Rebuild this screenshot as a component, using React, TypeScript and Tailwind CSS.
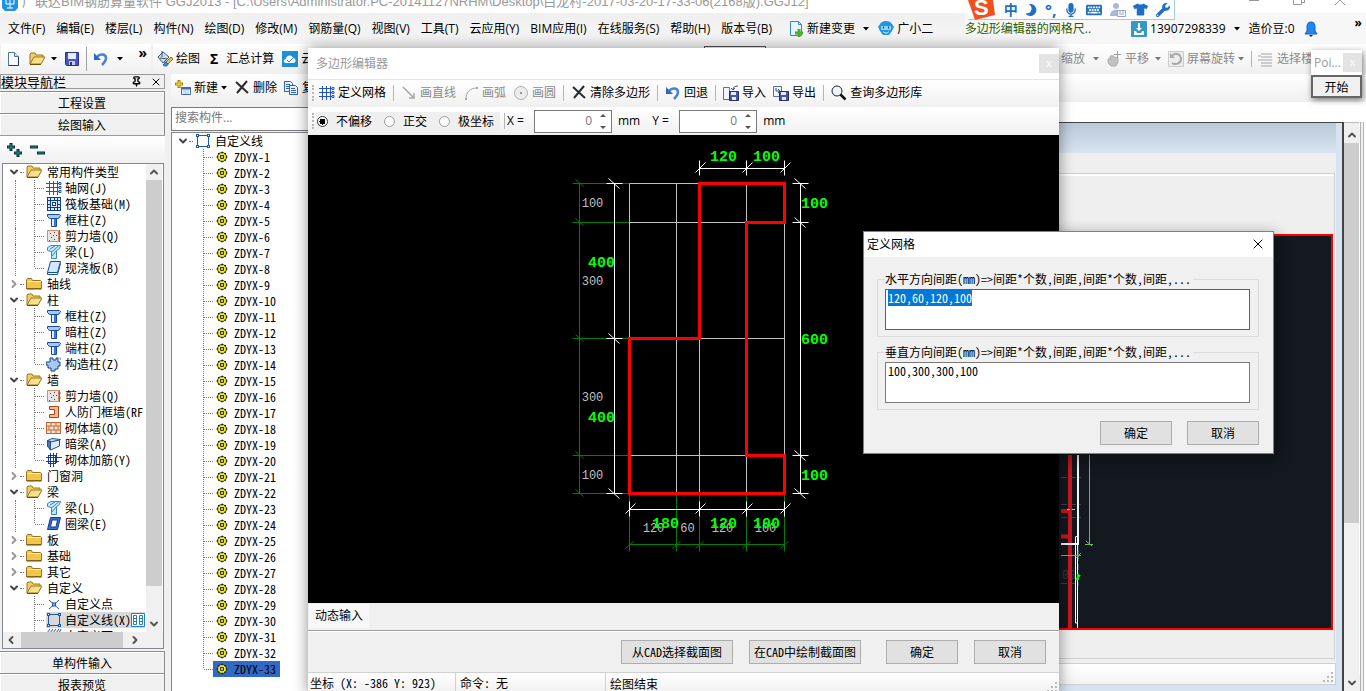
import { useEffect, useRef } from 'react'
import type { ReactNode } from 'react'
import { ChevronDown, ChevronLeft, ChevronRight, ChevronUp, Pin, X } from 'lucide-react'
import { FaKeyboard, FaMicrophone, FaMoon, FaTshirt, FaWrench } from 'react-icons/fa'

const ui = "font-['Open_Sans','Noto_Sans_CJK_SC',sans-serif]"
// half-width latin, the way the old bitmap font sets it
const song = "font-['Noto_Sans_CJK_SC',sans-serif] [font-feature-settings:'hwid']"

type IconName =
  | 'open' | 'closed' | 'grid' | 'raft' | 'column' | 'wall' | 'beam' | 'slab' | 'tie' | 'door'
  | 'brick' | 'hidden' | 'rebar' | 'ring' | 'point' | 'line' | 'face2' | 'gear' | 'file' | 'save' | 'undo'
  | 'paint' | 'cloud' | 'new' | 'delete' | 'copy' | 'straight' | 'arc' | 'circle' | 'import'
  | 'export' | 'search' | 'change' | 'robot' | 'download' | 'bell' | 'hand' | 'rotate' | 'layers' | 'face'

const shapes: Record<IconName, ReactNode> = {
  open: (
    <>
      <path d="M1 13V3l1-1h4l1 2h7v3" fill="#f3cf63" stroke="#9a7420" />
      <path d="M1 13 5 6h11l-4 7z" fill="#fbe08a" stroke="#9a7420" />
      <path d="M1 13.500h11" stroke="#6b4e12" />
    </>
  ),
  closed: (
    <>
      <path d="M.5 12.500V3.500l1-1h4l1 2h8l1 1v7z" fill="#f2c64d" stroke="#9a7420" />
      <path d="M1.500 5.500h13" stroke="#fdeeb5" />
      <path d="M.5 13h15" stroke="#6b4e12" />
    </>
  ),
  grid: (
    <>
      <path d="M3.500 1v14M7.500 1v14M11.500 1v14M0 3.500h13M0 7.500h13M0 11.500h13" stroke="#2356b8" fill="none" />
      <path d="M13 2.500h2v2h-2zM13 6.500h2v2h-2zM13 10.500h2v2h-2z" stroke="#2356b8" />
    </>
  ),
  raft: (
    <>
      <rect x="1.500" y="1.500" width="13" height="13" fill="#dbe9fb" stroke="#0d3f86" />
      <path d="M4.500 2v12M11.500 2v12M2 4.500h12M2 11.500h12M2 8.500h3M11 8.500h3M8.500 2v3M8.500 11v3" stroke="#0d3f86" />
      <rect x="6.500" y="6.500" width="3" height="3" fill="#fff" stroke="#0d3f86" />
    </>
  ),
  column: (
    <>
      <path d="M1.500 2.500h12l1 1-2 3h-9l-2-2z" fill="#a9c8f3" stroke="#164c9f" />
      <path d="M5.500 6.500h5v8h-5z" fill="#e2eefc" stroke="#164c9f" />
      <path d="M9 7v7" stroke="#3d7bd0" strokeWidth="2" />
    </>
  ),
  wall: (
    <>
      <path d="M1.500 2.500h11v11h-11z" fill="#e6e6e6" stroke="#d58a61" />
      <path d="M4 5.500h1M8 4.500h1M10 7.500h1M5 9.500h1M8 11.500h1M3 12.500h1M7 7.500h1" stroke="#444" />
      <path d="M13.500 2v12M12 5h3M12 10h3" stroke="#b5562b" />
    </>
  ),
  beam: (
    <>
      <path d="M1.500 3.500 5 1.500h9.500l-1 3-3 2v8h-5v-7l-4-1z" fill="#cbe6fa" stroke="#2b8bd0" />
      <path d="m4 5 5-3M5.500 8l7-6M6 12l4-5" stroke="#2b8bd0" />
    </>
  ),
  slab: (
    <>
      <path d="M4.500 1.500h10l-3 11h-10z" fill="#d3e6fb" stroke="#174c9f" />
      <path d="M1.500 12.500v2h10l3-11" stroke="#174c9f" fill="none" />
    </>
  ),
  tie: (
    <>
      <path d="M4 2h3v2h3V2h2v4h2v4h-2v3H9v2H5v-3H2V9H0V6h4z" fill="#a7c9f2" stroke="#153f86" />
      <path d="M12.500 2h2v2" stroke="#7aa5dd" />
    </>
  ),
  door: <path d="M3.500 2.500h9v11h-9v-3h5v-5h-5z" fill="#f7b68d" stroke="#a14a1a" />,
  brick: (
    <>
      <rect x=".5" y="2.500" width="14" height="11" fill="#fbe4d4" stroke="#c8632f" />
      <path d="M1 6h13M1 10h13M5 3v3M10 3v3M3 6v4M8 6v4M12 6v4M5 10v3M10 10v3" stroke="#c8632f" />
    </>
  ),
  hidden: (
    <>
      <path d="M1.500 4.500 6 2.500l8.500 1-8 2.500z" fill="#c6dcf4" stroke="#26508c" />
      <path d="M1.500 4.500v6l3 3.500V6z" fill="#4876b8" stroke="#26508c" />
      <path d="m4.500 6 9-2v6l-9 4z" fill="#dce9f8" stroke="#26508c" />
    </>
  ),
  rebar: (
    <>
      <path d="M4.500 1v14M7.500 1v14M0 5.500h16M0 9.500h13M10.500 1v10" stroke="#133c9a" fill="none" />
      <rect x="2.500" y="3.500" width="7" height="8" fill="none" stroke="#133c9a" />
    </>
  ),
  ring: (
    <>
      <path d="M4.500 1.500h10l-3 12h-10z" fill="#3a6fd0" stroke="#123d96" />
      <path d="M6 4h5.500l-1.500 7H4.500z" fill="#fff" stroke="#123d96" />
    </>
  ),
  point: (
    <>
      <path d="m3 4 10 9M13 4 3 13" stroke="#1c55b0" />
      <rect x="6.500" y="7" width="3" height="3" fill="#7fb4f0" stroke="#1c55b0" />
    </>
  ),
  line: (
    <>
      <path d="M2.500 2.500h11v11h-11z" fill="none" stroke="#1d56b5" />
      <path d="M1 1h3v3H1zM12 1h3v3h-3zM1 12h3v3H1zM12 12h3v3h-3z" fill="#1d56b5" />
      <path d="M2 2h1v1H2zM13 2h1v1h-1zM2 13h1v1H2zM13 13h1v1h-1z" fill="#fff" />
    </>
  ),
  face2: <path d="m1 5 3-4M4 5l3-4M7 5l3-4M10 5l3-4M13 5l2-4M1 12V6h13v6" stroke="#1d56b5" />,
  gear: (
    <>
      <circle cx="8" cy="8" r="4.500" fill="#ff0" stroke="#222" strokeWidth="1" />
      <path d="M8 2.500v11M2.500 8h11M4 4l8 8M12 4l-8 8" stroke="#222" strokeDasharray="2 1" />
      <circle cx="8" cy="8" r="3" stroke="#ff0" />
      <circle cx="8" cy="8" r="1.500" fill="#fff" stroke="#222" />
    </>
  ),
  file: (
    <>
      <path d="M3.500 1.500h6l4 4v9h-10z" fill="#f8fbff" stroke="#54749c" />
      <path d="M9.500 1.500v4h4" fill="#c9dcf2" stroke="#54749c" />
      <path d="M13.500 6v8.500h-10" stroke="#243c5e" fill="none" />
    </>
  ),
  save: (
    <>
      <path d="M1.500 1.500h13v13h-12l-1-1z" fill="#4a55c4" stroke="#272f86" />
      <path d="M4 2h8v6H4z" fill="#e7ecfa" />
      <path d="M5 10h6v4H5z" fill="#c8cdd8" />
      <path d="M6 11h2v3H6z" fill="#272f86" />
    </>
  ),
  undo: (
    <>
      <path d="M4 6c3-4 9-3 9 1 0 3-2 5-4 7" fill="none" stroke="#4a7fd6" strokeWidth="2.500" />
      <path d="M1 2v7h7z" fill="#2f67c9" />
    </>
  ),
  paint: (
    <>
      <path d="m1 6 5-5 6 5-6 6z" fill="#cfdff2" stroke="#3c5576" />
      <path d="M5 6V0M3 7l7 1" stroke="#3c5576" />
      <path d="m9 11 5-5 2 2-5 5z" fill="#e9c557" stroke="#8b6a1c" />
      <path d="M6 14c2 2 5 1 5-1l-2-2c-2 0-1 2-3 3z" fill="#3f87d9" stroke="#2a5f9e" />
    </>
  ),
  cloud: (
    <>
      <rect width="16" height="16" fill="#1d8fd6" />
      <path d="M4 12c-3 0-3-4 0-4 0-4 6-5 7-1 3 0 4 5 0 5z" fill="#fff" />
      <path d="m5 9 2 2 4-4" stroke="#1d8fd6" fill="none" />
    </>
  ),
  new: (
    <>
      <path d="M4 0v8M0 4h8" stroke="#a88500" strokeWidth="3" />
      <path d="M4 1v6M1 4h6" stroke="#ffe34d" />
      <path d="M6.500 7.500h9v7h-9z" fill="#fff" stroke="#3d6bb3" />
      <path d="M6 8.500h10" stroke="#3d6bb3" strokeWidth="2" />
      <path d="M8 11h6M8 13h6" stroke="#9bb6dd" />
    </>
  ),
  delete: <path d="m2 2 12 11M13 1 3 13" stroke="#2b2b33" strokeWidth="2" />,
  copy: (
    <>
      <path d="M1.500 1.500h6l2 2v8h-8z" fill="#eaf2fd" stroke="#2f62b3" />
      <path d="M3 4.500h4M3 6.500h4M3 8.500h4" stroke="#2f62b3" />
      <path d="M6.500 5.500h6l2 2v7h-8z" fill="#eaf2fd" stroke="#2f62b3" />
      <path d="M8 8.500h4M8 10.500h5M8 12.500h5" stroke="#2f62b3" />
    </>
  ),
  straight: <path d="m2 2 11 11M13 8v5H8" stroke="#a6a6a6" strokeWidth="1.500" fill="none" />,
  arc: (
    <>
      <path d="M3 14C3 7 7 3 14 3" stroke="#a6a6a6" fill="none" />
      <path d="M2 13h2v2H2zM13 2h2v2h-2z" fill="#a6a6a6" />
    </>
  ),
  circle: (
    <>
      <circle cx="8" cy="8" r="6.500" fill="#ececec" stroke="#b0b0b0" />
      <path d="M7 8h2" stroke="#999" strokeWidth="2" />
    </>
  ),
  import: (
    <>
      <path d="M.5 2.500h6v12h-6z" fill="#f2f6fc" stroke="#5c728c" />
      <path d="M6.500 6.500h9v9h-9z" fill="#4a55a8" stroke="#272f66" />
      <path d="M8 7h5v3H8zM9 12h4v3H9z" fill="#e7ecfa" />
      <path d="M15 1c-3 0-5 1-5 4M8 3l2 2 2-2" stroke="#33557d" fill="none" />
    </>
  ),
  export: (
    <>
      <path d="M.5 1.500h8v10h-8z" fill="#f2f6fc" stroke="#5c728c" />
      <path d="M6.500 6.500h9v9h-9z" fill="#4a55a8" stroke="#272f66" />
      <path d="M8 7h5v3H8zM9 12h4v3H9z" fill="#e7ecfa" />
      <path d="M3 3v3h4M5 4l2 2-2 2" stroke="#33557d" fill="none" />
    </>
  ),
  search: (
    <>
      <circle cx="6" cy="6" r="5" fill="#eef6fc" stroke="#222" />
      <path d="m9.500 9.500 5 5" stroke="#111" strokeWidth="2.500" />
    </>
  ),
  change: (
    <>
      <path d="M2.500.5h8l3 3v11h-11z" fill="#e8f5fc" stroke="#2c8ec2" />
      <path d="M10.500.5v3h3" fill="none" stroke="#2c8ec2" />
      <path d="M11 8v8M7 12h8" stroke="#4caf2f" strokeWidth="3" />
    </>
  ),
  robot: (
    <>
      <path d="M2 3c2-4 10-4 12 0l2 3-2 4-3 4H5l-3-4-2-4z" fill="#2196e3" />
      <path d="M3 5h10v4H3z" fill="#8fd0f8" />
      <path d="M5 6.500h1M10 6.500h1" stroke="#0d4474" strokeWidth="2" />
      <path d="M5 10.500c2 2 4 2 6 0" stroke="#fff" fill="none" />
    </>
  ),
  download: (
    <>
      <rect width="16" height="16" rx="1" fill="#3499c9" />
      <path d="M7 2h2v5h2l-3 3-3-3h2zM3 10h2l1 2h4l1-2h2v4H3z" fill="#fff" />
    </>
  ),
  bell: (
    <>
      <path d="M8 1c3 0 4 2 4 5v4l2 3H2l2-3V6c0-3 1-5 4-5z" fill="#1e88f5" stroke="#1463b8" />
      <path d="M6 14h4l-2 2z" fill="#123" />
    </>
  ),
  hand: (
    <>
      <path d="M2 9c0-2 2-2 2 0V6c0-2 2-2 2 0 0-2 2-2 2 0l4 1v4l-2 4H5L2 12z" fill="#c2c2c2" stroke="#b0b0b0" />
      <path d="M11.500 0v7M8 3.500h7" stroke="#999" />
    </>
  ),
  rotate: (
    <>
      <path d="M.5.5h15v15H.5z" fill="#ececec" stroke="#ccc" />
      <path d="M4 5c3-4 9-2 9 3s-6 6-9 4" fill="none" stroke="#a8a8a8" strokeWidth="2" />
      <path d="M2 2v5h5z" fill="#aaa" />
    </>
  ),
  layers: <path d="M3 3h11M3 6h11M3 9h11M3 12h11M3 15h11M0 5h3M0 9h3" stroke="#a3a3a3" fill="none" />,
  face: (
    <>
      <circle cx="6" cy="4" r="3" fill="#aab8d8" />
      <path d="M0 14c0-8 10-8 11-2v2z" fill="#aab8d8" />
      <path d="M7.500 8.500h8v6h-8z" fill="#fff" stroke="#8fa2cc" />
      <path d="M9 10h2M12 10h2M9 12h5" stroke="#8fa2cc" />
    </>
  ),
}

function Icon({ name }: { name: IconName }) {
  return (
    <svg width="16" height="16" viewBox="0 0 16 16" fill="none" className="shrink-0" aria-hidden="true">
      {shapes[name]}
    </svg>
  )
}

function Caret({ muted = false }: { muted?: boolean }) {
  return (
    <svg width="7" height="4" viewBox="0 0 7 4" className="shrink-0" aria-hidden="true">
      <path d="M0 0h6L3 3.500z" fill={muted ? '#777' : '#000'} />
    </svg>
  )
}

function Sep() {
  return <div className="h-4 w-px shrink-0 bg-[#b5b5b5]" />
}

function Tool({ icon, label, muted = false, caret = false }: { icon: IconName; label?: string; muted?: boolean; caret?: boolean }) {
  return (
    <button className={muted ? 'flex shrink-0 items-center gap-[3px] text-[#8a8a8a]' : 'flex shrink-0 items-center gap-[3px]'} aria-label={label ?? icon}>
      <Icon name={icon} />
      {label}
      {caret && <Caret muted={muted} />}
    </button>
  )
}

const menus = [
  '文件(F)', '编辑(E)', '楼层(L)', '构件(N)', '绘图(D)', '修改(M)', '钢筋量(Q)', '视图(V)',
  '工具(T)', '云应用(Y)', 'BIM应用(I)', '在线服务(S)', '帮助(H)', '版本号(B)',
]

function TitleBar() {
  return (
    <div className="flex h-[13px] shrink-0 items-end overflow-hidden bg-white pl-0.5">
      <svg width="16" height="11" viewBox="0 0 16 11" className="shrink-0 self-start">
        <path d="M0 0h16v8l-3 3H3L0 8z" fill="#1e93e4" />
        <path d="M4 0v4h8V0M8 0v8M5 8h6" stroke="#fff" fill="none" />
      </svg>
      <div className="-mt-2 flex h-5 flex-1 items-center self-start pl-1 font-['Liberation_Sans','Noto_Sans_CJK_SC',sans-serif] text-[13px] leading-5 whitespace-nowrap text-[#999]">
        广联达BIM钢筋算量软件 GGJ2013 - [C:\Users\Administrator.PC-20141127NRHM\Desktop\白龙村-2017-03-20-17-33-06(2168版).GGJ12]
      </div>
      <svg width="110" height="13" viewBox="0 0 110 13" className="mr-2 shrink-0" fill="none" stroke="#999">
        <path d="M1 .5h10M45.500 0v4.500h8V0M56.500 0v3M53 2.500h3M87 5l5-5 5 5" />
      </svg>
    </div>
  )
}

function MenuBar() {
  return (
    <div className="flex h-[31px] shrink-0 items-center bg-linear-to-b from-[#efefef] to-[#f7f7f7] pl-2 whitespace-nowrap">
      <nav className="flex gap-[11px]">
        {menus.map((m) => (
          <button key={m}>{m}</button>
        ))}
      </nav>
      <div className="ml-4 flex items-center gap-2">
        <Tool icon="change" label="新建变更" />
        <Caret />
        <Tool icon="robot" label="广小二" />
      </div>
      <div className="ml-auto flex h-full items-center bg-[#f7f7f7] pr-1">
        <a href="#" className="mr-10 text-[#2f5d00]">多边形编辑器的网格尺..</a>
        <Tool icon="download" label="13907298339" />
        <span className="mx-2"><Caret /></span>
        <span className="mr-2">造价豆:0</span>
        <Icon name="bell" />
        <span className="-mt-3 ml-9 font-bold">»</span>
      </div>
    </div>
  )
}

function MainToolbar() {
  return (
    <div className="flex h-[30px] shrink-0 gap-0.5 bg-[#f0f0f0] whitespace-nowrap">
      <div className="ml-px flex w-[150px] items-center bg-linear-to-b from-white to-[#f0f0f0] pl-1">
        <Tool icon="file" />
        <span className="ml-2 flex items-center gap-1.5">
          <Tool icon="open" />
          <Caret />
        </span>
        <span className="mr-1.5 ml-1.5 flex"><Tool icon="save" /></span>
        <div className="mr-1.5 h-6 w-px bg-[#a0a0a0]" />
        <Tool icon="undo" />
        <span className="ml-2"><Caret /></span>
        <span className="-mt-3 ml-auto pr-1 text-sm font-bold">»</span>
      </div>
      <div className="flex flex-1 items-center bg-linear-to-b from-white to-[#f0f0f0] pl-1">
        <Tool icon="paint" label="绘图" />
        <button className="ml-2.5 flex items-center gap-2">
          <b className="text-sm">Σ</b>汇总计算
        </button>
        <span className="ml-2"><Tool icon="cloud" label="云检查" /></span>
        <select aria-label="楼层" className="ml-[367px] h-[26px] w-[62px] border border-[#555] bg-white" />
        <div className="ml-auto flex items-center gap-1.5 pr-[41px] text-[#8a8a8a]">
          <button className="flex items-center gap-2">缩放 <Caret muted /></button>
          <Tool icon="hand" label="平移" muted />
          <Caret muted />
          <Tool icon="rotate" label="屏幕旋转" muted caret />
          <Sep />
          <Tool icon="layers" label="选择楼层" muted />
        </div>
      </div>
    </div>
  )
}

type Node = { label: string; open?: boolean; items?: [IconName, string][] }

const tree: Node[] = [
  {
    label: '常用构件类型',
    open: true,
    items: [['grid', '轴网(J)'], ['raft', '筏板基础(M)'], ['column', '框柱(Z)'], ['wall', '剪力墙(Q)'], ['beam', '梁(L)'], ['slab', '现浇板(B)']],
  },
  { label: '轴线' },
  { label: '柱', open: true, items: [['column', '框柱(Z)'], ['column', '暗柱(Z)'], ['column', '端柱(Z)'], ['tie', '构造柱(Z)']] },
  {
    label: '墙',
    open: true,
    items: [['wall', '剪力墙(Q)'], ['door', '人防门框墙(RF'], ['brick', '砌体墙(Q)'], ['hidden', '暗梁(A)'], ['rebar', '砌体加筋(Y)']],
  },
  { label: '门窗洞' },
  { label: '梁', open: true, items: [['beam', '梁(L)'], ['ring', '圈梁(E)']] },
  { label: '板' },
  { label: '基础' },
  { label: '其它' },
  { label: '自定义', open: true, items: [['point', '自定义点'], ['line', '自定义线(X)'], ['face2', '自定义面']] },
]

function Branch({ last = false }: { last?: boolean }) {
  return (
    <svg width="12" height="16" viewBox="0 0 12 16" className="shrink-0" fill="none" stroke="#777" strokeDasharray="1 1">
      <path d={last ? 'M.5 0v8' : 'M.5 0v16'} />
      <path d="M1 8.500h10" />
    </svg>
  )
}

function Twisty({ open = false }: { open?: boolean }) {
  return (
    <span className="flex w-3 shrink-0 items-center justify-center">
      {open ? <ChevronDown size={12} strokeWidth={4} color="#444" /> : <ChevronRight size={12} strokeWidth={4} color="#999" />}
    </span>
  )
}

function ScrollButton({ dir }: { dir: 'up' | 'down' | 'left' | 'right' }) {
  const icons = { up: ChevronUp, down: ChevronDown, left: ChevronLeft, right: ChevronRight }
  const Glyph = icons[dir]
  return (
    <button className="flex size-4 shrink-0 items-center justify-center bg-[#f0f0f0]" aria-label={dir}>
      <Glyph size={12} strokeWidth={4} color="#555" />
    </button>
  )
}

function NavButton({ children }: { children: ReactNode }) {
  return (
    <button className="h-[22px] shrink-0 border-t border-r border-[#8c8c8c] bg-[#f0f0f0] leading-[19px] shadow-[inset_1px_1px_0_#fff]">
      {children}
    </button>
  )
}

function NavPanel() {
  return (
    <div className={`${song} flex h-[calc(100%+4px)] w-[165px] shrink-0 flex-col`}>
      <div className="mb-0.5 flex h-[15px] shrink-0 items-center border border-[#9a9a9a] text-[13px] leading-3">
        模块导航栏
        <span className="ml-auto flex items-center gap-2 pr-0.5">
          <Pin size={11} strokeWidth={3} />
          <X size={12} />
        </span>
      </div>
      <NavButton>工程设置</NavButton>
      <NavButton>绘图输入</NavButton>
      <div className="flex h-7 shrink-0 items-center border-t border-[#9a9a9a] bg-linear-to-b from-white to-[#f0f0f0] pl-1.5">
        <svg width="42" height="16" viewBox="0 0 42 16" stroke="#0b2f2c" strokeWidth="3">
          <path d="M1 5h8M5 1v8M8 11h8M12 7v8M24 5h8M31 11h8" />
          <path d="M2 5h6M5 2v6M9 11h6M12 8v6M25 5h6M32 11h6" stroke="#17938a" strokeWidth="1" />
        </svg>
      </div>
      <div className="mr-px ml-0.5 flex min-h-0 flex-1 flex-col border border-[#828790] bg-white">
        <div className="flex min-h-0 flex-1">
          <div className="min-w-0 flex-1 overflow-hidden pl-[5px]">
            {tree.map((node, n) => (
              <div key={node.label}>
                <div className="flex h-4 items-center leading-4 whitespace-nowrap">
                  <Twisty open={node.open} />
                  <span className="mr-0.5 w-1 shrink-0 border-t border-dotted border-[#777]" />
                  <Icon name={node.open ? 'open' : 'closed'} />
                  <span className="pl-[5px]">{node.label}</span>
                </div>
                {node.items?.map(([icon, label], i) => (
                  <div key={label} className="flex h-4 items-center leading-4 whitespace-nowrap">
                    <span className={n < tree.length - 1 ? 'ml-[7px] h-4 w-[19px] shrink-0 border-l border-dotted border-[#777]' : 'ml-[7px] w-[19px] shrink-0'} />
                    <Branch last={i === (node.items?.length ?? 0) - 1} />
                    <span className={label === '自定义线(X)' ? 'flex h-4 items-center bg-[#d9d9d9]' : 'flex h-4 items-center'}>
                      <Icon name={icon} />
                      <span className="pl-[3px]">{label}</span>
                      {label === '自定义线(X)' && (
                        <svg width="14" height="14" viewBox="0 0 14 14" className="shrink-0" fill="#fff" stroke="#1d7fd0">
                          <path d="M.5.5h13v13H.5zM2.500 2.500h3v9h-3zM8.500 2.500h3v9h-3zM3 5.500h2M9 5.500h2M3 8.500h2M9 8.500h2" />
                        </svg>
                      )}
                    </span>
                  </div>
                ))}
              </div>
            ))}
          </div>
          <div className="mr-px flex w-4 flex-col bg-[#f0f0f0]">
            <ScrollButton dir="up" />
            <div className="flex-1 bg-[#cdcdcd]" />
            <div className="h-[30px]" />
            <ScrollButton dir="down" />
          </div>
        </div>
        <div className="flex h-4 shrink-0 bg-[#f0f0f0]">
          <ScrollButton dir="left" />
          <div className="mr-1 ml-0.5 flex-1 bg-[#cdcdcd]" />
          <ScrollButton dir="right" />
          <div className="w-5" />
        </div>
      </div>
      <div className="h-0.5 shrink-0" />
      <NavButton>单构件输入</NavButton>
      <NavButton>报表预览</NavButton>
    </div>
  )
}

const members = Array.from({ length: 33 }, (_, i) => `ZDYX-${i + 1}`)

function MemberPanel() {
  return (
    <div className={`${song} flex w-[190px] shrink-0 flex-col pt-[5px]`}>
      <input
        aria-label="搜索构件"
        placeholder="搜索构件..."
        className={`${ui} mb-px h-6 shrink-0 border border-[#7a7a7a] bg-white px-[3px] pb-1 placeholder:text-[#777]`}
      />
      <div className="min-h-0 flex-1 overflow-hidden border-t border-l border-[#828790] bg-white">
        <div className="flex h-4 items-center pl-[5px] leading-4">
          <Twisty open />
          <span className="mr-0.5 w-1 border-t border-dotted border-[#777]" />
          <Icon name="line" />
          <span className="pl-1">自定义线</span>
        </div>
        {members.map((m, i) => (
          <div key={m} className="flex h-4 items-center pl-[31px] leading-4">
            <Branch last={i === members.length - 1} />
            <span className={i === members.length - 1 ? '-ml-0.5 flex h-4 items-center gap-1 bg-[#316ac5] pr-1 pl-px' : '-ml-0.5 flex h-4 items-center gap-1 pl-px'}>
              <Icon name="gear" />
              {m}
            </span>
          </div>
        ))}
      </div>
    </div>
  )
}

function CadView() {
  return (
    <div className="flex min-h-0 flex-1 items-end justify-end overflow-hidden border-2 border-[#f00] bg-[#14181f]">
      <svg width="270" height="173" viewBox="1059 454 270 173" className="shrink-0" fill="none">
        <path d="M1059 476.500h20M1059 503.500h20M1059 516.500h20M1059 582.500h18M1076.500 545v40" stroke="#39424e" strokeDasharray="6 3" />
        <text x="1060" y="578" fontSize="12" fill="#333c47" className="font-['Liberation_Mono',monospace]">00</text>
        <path d="M1068 454v173M1059 510h8M1059 535.500h8" stroke="#c8171f" strokeWidth="4" />
        <path d="M1059 543h18M1076 454v89" stroke="#f2f2f2" strokeWidth="2" />
        <path d="M1073.500 535.500h2v87M1073.500 536v86h2v5" stroke="#fff" />
        <path d="M1065 508.500h10" stroke="#9cc4ee" strokeDasharray="3 2" />
        <path d="M1087.500 454v90M1083 543.500h8M1084 540l6 5M1059 554.500h20M1076 550v8M1074 557l5-5" stroke="#6cb85e" />
        <path d="m1074 579 4-5M1076 573v6" stroke="#0f0" strokeWidth="2" />
      </svg>
    </div>
  )
}

function Grip() {
  return (
    <svg width="12" height="12" viewBox="0 0 12 12" className="shrink-0" fill="#b8b8b8">
      <path d="M8 0h2v2H8zM4 4h2v2H4zM8 4h2v2H8zM0 8h2v2H0zM4 8h2v2H4zM8 8h2v2H8z" />
    </svg>
  )
}

function DrawingArea() {
  return (
    <div className="flex min-w-0 flex-1 flex-col pt-5">
      <div className="flex min-h-0 flex-1">
        <div className="flex min-w-0 flex-1 flex-col border-t border-r-2 border-[#444] bg-[#d7e3f0] pr-1.5 pb-1.5">
          <div className="h-[30px] shrink-0 bg-linear-to-b from-[#bac9d9] to-[#d7e3f0]" />
          <div className="flex min-h-0 flex-1 flex-col bg-[#efefef] pt-5">
            <div className="mr-px flex min-h-0 flex-1 flex-col border-t border-r border-b border-[#d0d0d0] pt-[60px] pr-px pb-7 shadow-[inset_0_2px_0_#fff]">
              <CadView />
            </div>
            <div className="mt-1 flex h-[22px] shrink-0 items-end justify-end border border-[#d0d0d0] bg-linear-to-b from-white to-[#f3f3f3]">
              <Grip />
            </div>
          </div>
        </div>
        <div className="flex w-[15px] flex-col border-t border-[#bbb] bg-[#f0f0f0] pt-1">
          <ScrollButton dir="up" />
          <div className="flex-[5] bg-[#cdcdcd]" />
          <div className="flex-[2]" />
          <ScrollButton dir="down" />
        </div>
        <div className="mr-0.5 ml-px w-1 border-x border-[#b0b0b0] bg-[#f0f0f0]" />
      </div>
    </div>
  )
}

const gridX = [629, 676, 699, 746, 784]
const gridY = [183, 222, 338, 455, 493]

const bigLabels: [number, number, string][] = [
  [723, 156, '120'], [766, 156, '100'], [601, 262, '400'], [601, 417, '400'], [814, 203, '100'],
  [814, 339, '600'], [814, 475, '100'], [665, 523, '180'], [723, 523, '120'], [766, 523, '100'],
]

const smallLabels: [number, number, string][] = [
  [592, 203, '100'], [592, 281, '300'], [592, 397, '300'], [592, 475, '100'],
  [653, 528, '120'], [687, 528, '60'], [722, 528, '120'], [765, 528, '100'],
]

// dimension ticks: along a vertical chain (v) or a horizontal chain (h)
const vTick = (x: number, y: number) => `M${x - 8} ${y}h16M${x - 6} ${y - 5}l11 10`
const hTick = (x: number, y: number) => `M${x} ${y - 8}v15M${x - 4} ${y + 4}l10-10`

function PolygonCanvas() {
  return (
    <svg width="751" height="468" viewBox="307.500 134.500 751 468" className="shrink-0 bg-black" fill="none">
      <g stroke="#008000">
        <path d="M579 183v310M629 544h155" />
        {gridY.map((y) => <path key={y} d={`M572 ${y}h57M575 ${y - 4}l8 7`} />)}
        {gridX.map((x) => <path key={x} d={`M${x} 493v58M${x - 4} 548l8-7`} />)}
      </g>
      <g stroke="#c0c0c0">
        {gridX.map((x) => <path key={x} d={`M${x} 183v310`} />)}
        {gridY.map((y) => <path key={y} d={`M629 ${y}h155`} />)}
      </g>
      <g fill="#c0c0c0" fontSize="12" textAnchor="middle" className="font-['Liberation_Mono',monospace]">
        {smallLabels.map(([x, y, t]) => <text key={`${x}-${y}`} x={x} y={y + 3}>{t}</text>)}
      </g>
      <g stroke="#fff">
        <path d="M614 183v310M800 183v310M699 168h85M629 509h155" />
        {[183, 338, 493].map((y) => <path key={y} d={vTick(614, y)} />)}
        {[183, 222, 455, 493].map((y) => <path key={y} d={vTick(800, y)} />)}
        {[699, 746, 784].map((x) => <path key={x} d={hTick(x, 168)} />)}
        {[629, 699, 746, 784].map((x) => <path key={x} d={hTick(x, 509)} />)}
      </g>
      <path d="M699 183h85v39h-38v233h38v38H629V338h70z" stroke="#f00" strokeWidth="3" />
      <g fill="#0f0" fontSize="15" fontWeight="700" textAnchor="middle" className="font-['Liberation_Mono',monospace]">
        {bigLabels.map(([x, y, t]) => <text key={`${x}-${y}`} x={x} y={y + 4}>{t}</text>)}
      </g>
    </svg>
  )
}

function Offset({ axis }: { axis: string }) {
  return (
    <label className="flex items-center gap-1.5">
      <span className="w-[21px] whitespace-nowrap">{axis} =</span>
      <span className="flex h-[23px] w-[78px] items-center border border-[#7a7a7a] bg-white pr-1">
        <input defaultValue="0" className="w-full min-w-0 pr-2 text-right text-[#777]" />
        <svg width="7" height="15" viewBox="0 0 7 15" className="shrink-0" fill="#555">
          <path d="M0 3h6L3 0zM0 12h6l-3 3z" />
        </svg>
      </span>
      mm
    </label>
  )
}

function DialogButton({ children, wide = false }: { children: ReactNode; wide?: boolean }) {
  return (
    <button className={`${song} ${wide ? 'w-28' : 'w-[72px]'} h-6 border border-[#adadad] bg-[#e1e1e1] leading-5 whitespace-nowrap`}>
      {children}
    </button>
  )
}

function PolygonEditor() {
  return (
    <div className="absolute top-12 left-[308px] flex w-[751px] flex-col bg-[#f0f0f0] shadow-[0_0_14px_rgba(0,0,0,0.45)]">
      <div className="flex h-[31px] items-center justify-between bg-white pl-2 text-[#999]">
        多边形编辑器
        <button aria-label="关闭" className="flex h-[19px] w-5 items-center justify-center bg-[#e3e3e3] text-[10px] text-white">x</button>
      </div>
      <div className="flex h-7 items-center gap-[7px] border-t border-[#e5e5e5] bg-linear-to-b from-white to-[#f0f0f0] pb-px pl-1 whitespace-nowrap">
        <div className="-mr-[7px] h-4 w-[7px] border-l-2 border-dotted border-[#b8b8b8]" />
        <Tool icon="grid" label="定义网格" />
        <Sep />
        <Tool icon="straight" label="画直线" muted />
        <Tool icon="arc" label="画弧" muted />
        <Tool icon="circle" label="画圆" muted />
        <Sep />
        <Tool icon="delete" label="清除多边形" />
        <Sep />
        <Tool icon="undo" label="回退" />
        <Sep />
        <Tool icon="import" label="导入" />
        <Tool icon="export" label="导出" />
        <Sep />
        <Tool icon="search" label="查询多边形库" />
      </div>
      <div className="flex h-7 items-center bg-linear-to-b from-white to-[#f0f0f0] pl-1">
        <div className="h-4 w-1 border-l-2 border-dotted border-[#b8b8b8]" />
        <div className={`${song} flex h-[18px] w-[184px] items-center gap-3 bg-[#efefef] pl-px`}>
          {['不偏移', '正交', '极坐标'].map((m, i) => (
            <label key={m} className="flex items-center gap-2">
              <input
                type="radio"
                name="offset"
                defaultChecked={i === 0}
                className="size-[11px] appearance-none rounded-full border border-[#999] bg-white checked:border-[#333] checked:bg-[radial-gradient(circle,#000_0_3px,#fff_3px)]"
              />
              {m}
            </label>
          ))}
        </div>
        <div className="mr-0.5 ml-1"><Sep /></div>
        <div className="flex gap-3">
          <Offset axis="X" />
          <Offset axis="Y" />
        </div>
      </div>
      <PolygonCanvas />
      <div className="h-7 border-b border-[#a0a0a0] pt-px pl-px">
        <button className="h-6 bg-[#f8f8f8] px-1.5">动态输入</button>
      </div>
      <div className="flex h-[41px] items-center justify-end border-t border-white pr-[13px]">
        <DialogButton wide>从CAD选择截面图</DialogButton>
        <span className="w-4" />
        <DialogButton wide>在CAD中绘制截面图</DialogButton>
        <span className="w-[25px]" />
        <DialogButton>确定</DialogButton>
        <span className="w-4" />
        <DialogButton>取消</DialogButton>
      </div>
      <div className={`${song} flex h-[22px] gap-0.5 border-t border-[#d0d0d0] bg-linear-to-b from-white to-[#f0f0f0] leading-5`}>
        <div className="w-[148px] border-r border-[#d0d0d0] pl-0.5">坐标 (X: -386 Y: 923)</div>
        <div className="w-[148px] border-r border-[#d0d0d0] pl-0.5">命令: 无</div>
        <div className="flex flex-1 items-end justify-between pl-0.5">
          绘图结束
          <Grip />
        </div>
      </div>
    </div>
  )
}

function GridDialog() {
  const first = useRef<HTMLTextAreaElement>(null)

  useEffect(() => {
    first.current?.select()
  }, [])

  const box = 'block h-[41px] w-full resize-none border border-[#7a7a7a] bg-white px-0.5 py-0.5 leading-3 outline-none selection:bg-[#0078d7] selection:text-white focus:border-[#0078d7]'

  return (
    <div className={`${song} absolute top-[231px] left-[863px] w-[411px] border border-[#3c92e4] bg-[#f0f0f0] shadow-[2px_4px_14px_rgba(0,0,0,0.45)]`}>
      <div className="flex h-[25px] items-center justify-between bg-white pr-[7px] pb-px pl-[3px]">
        定义网格
        <button aria-label="关闭"><X size={16} strokeWidth={1.5} /></button>
      </div>
      <div className="flex flex-col gap-2 pt-[15px] pr-3.5 pb-2 pl-[13px]">
        <fieldset className="border border-[#dcdcdc] pt-[3px] pr-2 pb-1.5 pl-[7px]">
          <legend className="h-3.5 pr-0.5 leading-[14px] whitespace-nowrap">
            <label htmlFor="hgap">水平方向间距(mm)=&gt;间距*个数,间距,间距*个数,间距,...</label>
          </legend>
          <textarea id="hgap" ref={first} defaultValue="120,60,120,100" spellCheck={false} className={box} />
        </fieldset>
        <fieldset className="border border-[#dcdcdc] pt-[3px] pr-2 pb-1.5 pl-[7px]">
          <legend className="h-3.5 pr-0.5 leading-[14px] whitespace-nowrap">
            <label htmlFor="vgap">垂直方向间距(mm)=&gt;间距*个数,间距,间距*个数,间距,...</label>
          </legend>
          <textarea id="vgap" defaultValue="100,300,300,100" spellCheck={false} className={box} />
        </fieldset>
        <div className="flex justify-end gap-[15px] pt-[3px]">
          <DialogButton>确定</DialogButton>
          <DialogButton>取消</DialogButton>
        </div>
      </div>
    </div>
  )
}

function ImeBar() {
  return (
    <div className="absolute top-0 right-[191px] flex h-5 w-[207px] items-center justify-between border-r border-b border-[#a9c8e8] bg-white pr-1 text-[#1f70c4]">
      <svg width="28" height="20" viewBox="0 0 28 20" className="shrink-0">
        <path d="M0 0h25l2 15-20 5z" fill="#f0501e" />
        <text x="6" y="15" fontSize="22" fontWeight="700" fill="#fff" className="font-['Liberation_Sans',sans-serif]">S</text>
      </svg>
      <b className="text-sm leading-4">中</b>
      <FaMoon size={12} className="-scale-x-100" />
      <b className="text-base leading-4">°,</b>
      <FaMicrophone size={14} />
      <FaKeyboard size={16} />
      <Icon name="face" />
      <FaTshirt size={15} />
      <FaWrench size={14} />
    </div>
  )
}

function PointWindow() {
  return (
    <div className="absolute top-[50px] right-1 w-[51px] bg-white shadow-[1px_2px_6px_rgba(0,0,0,0.5)]">
      <div className="flex h-[25px] items-center justify-between pl-[3px] text-[#999]">
        Poi...
        <button aria-label="关闭" className="flex h-[19px] w-[19px] items-center justify-center bg-[#e3e3e3] text-[10px] text-white">x</button>
      </div>
      <button className={`${song} h-[23px] w-full border-2 border-[#666] bg-[#f0f0f0] leading-[18px]`}>开始</button>
    </div>
  )
}

export default function App() {
  return (
    <div className={`${ui} relative flex h-screen flex-col overflow-hidden bg-[#f0f0f0] text-xs text-black`}>
      <TitleBar />
      <MenuBar />
      <MainToolbar />
      <div className="flex min-h-0 flex-1">
        <NavPanel />
        <div className="ml-[6px] flex min-w-0 flex-1 flex-col">
          <div className="flex h-7 shrink-0 items-center bg-linear-to-b from-white to-[#f0f0f0] pl-1">
            <Tool icon="new" label="新建" caret />
            <span className="ml-1.5 flex gap-1.5">
              <Tool icon="delete" label="删除" />
              <Tool icon="copy" label="复制" />
            </span>
          </div>
          <div className="flex min-h-0 flex-1">
            <MemberPanel />
            <div className="flex min-w-0 flex-1 bg-white">
              <DrawingArea />
            </div>
          </div>
        </div>
      </div>
      <PolygonEditor />
      <GridDialog />
      <PointWindow />
      <ImeBar />
    </div>
  )
}
